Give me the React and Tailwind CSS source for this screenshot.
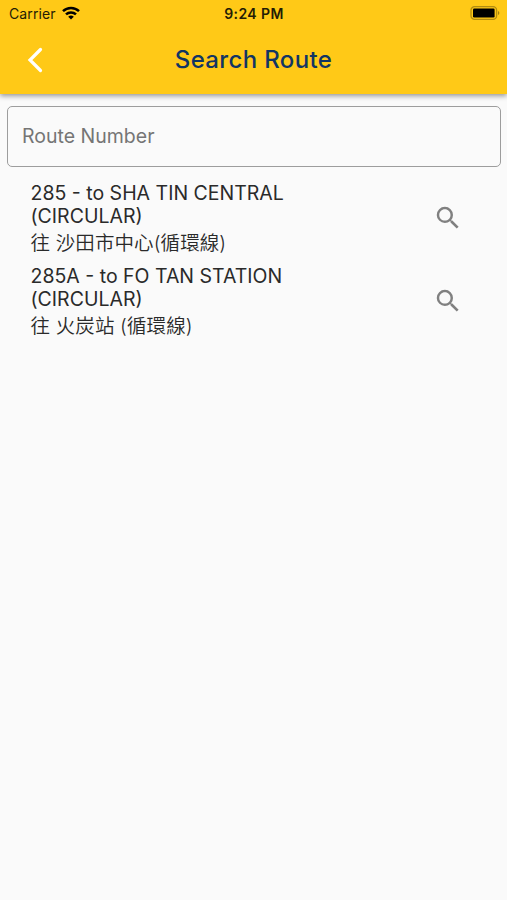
import React, { useState } from "react";
import { MdSearch } from "react-icons/md";

const routes = [
  { number: "285", dest: "SHA TIN CENTRAL (CIRCULAR)", destZh: "沙田市中心(循環線)" },
  { number: "285A", dest: "FO TAN STATION (CIRCULAR)", destZh: "火炭站 (循環線)" },
];

function App() {
  const [query, setQuery] = useState("");
  const results = routes.filter((r) => r.number.startsWith(query.toUpperCase()));

  return (
    <div className="flex min-h-screen flex-col bg-[#fafafa] font-['Inter','Noto_Sans_CJK_TC',sans-serif]">
      <header className="h-[94px] bg-[#ffc917] shadow-[0_2px_5px_rgba(0,0,0,0.4)]">
        <StatusBar />
        <NavBar title="Search Route" />
      </header>
      <main className="px-[7px] pt-3">
        <input
          value={query}
          onChange={(e) => setQuery(e.target.value)}
          placeholder="Route Number"
          className="block h-[61px] w-[494px] rounded-[5px] border border-[#9d9d9d] px-3.5 pb-[2px] text-[19.5px] text-[#202020] outline-none placeholder:text-[#757575]"
        />
        <ul className="pt-[15px]">
          {results.map((r) => (
            <RouteRow key={r.number} route={r} />
          ))}
        </ul>
      </main>
    </div>
  );
}

// Carrier, clock and battery
function StatusBar() {
  return (
    <div className="grid h-[27px] grid-cols-[1fr_auto_1fr] items-center pl-[9px] pr-[7px] text-[14px] text-[#241c05]">
      <div className="flex items-center gap-1.5">
        <span className="tracking-[0.1px]">Carrier</span>
        <WifiIcon />
      </div>
      <span className="-ml-px text-[14px] font-semibold tracking-[0.4px]">9:24 PM</span>
      <div className="flex justify-end">
        <BatteryIcon />
      </div>
    </div>
  );
}

function WifiIcon() {
  return (
    <svg className="-mt-[2px]" width="18" height="14" viewBox="0 0 18 14" fill="none" stroke="#000" strokeWidth="2.5">
      <path d="M1 5.2a11.4 11.4 0 0 1 16 0" />
      <path d="M4 8.4a7.2 7.2 0 0 1 10 0" />
      <path d="M9 13.6 6.2 10.8a4 4 0 0 1 5.6 0Z" fill="#000" stroke="none" />
    </svg>
  );
}

function BatteryIcon() {
  return (
    <svg className="-mt-px" width="30" height="14" viewBox="0 0 30 14" fill="none">
      <rect x="1" y="0.7" width="25.6" height="12.6" rx="3.6" stroke="#b18c10" strokeWidth="1.3" />
      <rect x="3" y="2.6" width="21.6" height="8.8" rx="1.2" fill="#000" />
      <path d="M28 4.9a2.3 2.3 0 0 1 0 4.2Z" fill="#a3800e" />
    </svg>
  );
}

function NavBar({ title }) {
  return (
    <div className="grid h-[65px] grid-cols-[1fr_auto_1fr] items-center">
      <button className="justify-self-start pl-[27px]" aria-label="Back">
        <svg width="17" height="26" viewBox="0 0 17 26" fill="none" stroke="#fff" strokeWidth="3.2" strokeLinecap="round" strokeLinejoin="miter">
          <path d="M13.5 2.5 3 13 13.5 23.5" />
        </svg>
      </button>
      <h1 className="text-2xl font-medium tracking-[0.35px] text-[#123563]">{title}</h1>
    </div>
  );
}

function RouteRow({ route }) {
  return (
    <li className="flex h-[83px] items-start pl-[23.5px] pr-[37px]">
      <div className="w-[280px] text-[19.5px] leading-[23.4px] text-[#2a2a2a]">
        <p>{`${route.number} - to ${route.dest}`}</p>
        <p className="pt-[3px] font-[350] tracking-[0.1px]">{`往 ${route.destZh}`}</p>
      </div>
      <button className="ml-auto mt-[21px]" aria-label="Search">
        <MdSearch className="h-[30px] w-[30px] text-[#808080]" />
      </button>
    </li>
  );
}

export default App;
